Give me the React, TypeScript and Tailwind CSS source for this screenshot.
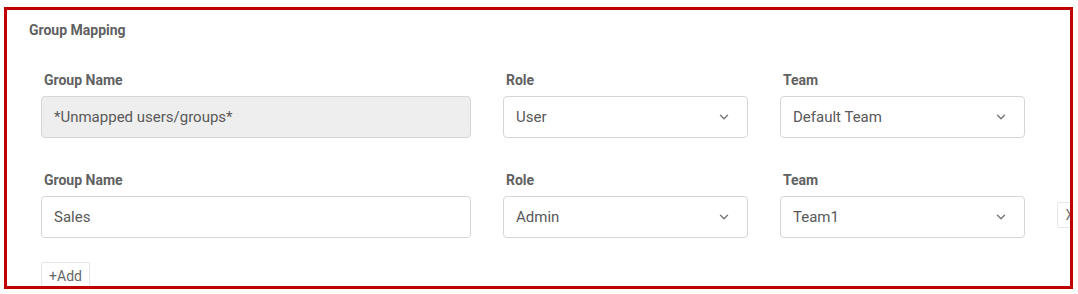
import { ChevronDown } from 'lucide-react';

interface MappingRow {
  group: string;
  role: string;
  team: string;
  locked?: boolean;
}

const rows: MappingRow[] = [
  { group: '*Unmapped users/groups*', role: 'User', team: 'Default Team', locked: true },
  { group: 'Sales', role: 'Admin', team: 'Team1' },
];

function Label({ children }: { children: string }) {
  return (
    <div className="pl-[3px] text-[14px] leading-[20px] font-bold text-[#616161]">{children}</div>
  );
}

function SelectBox({ value }: { value: string }) {
  return (
    <div className="flex h-[42px] items-center justify-between rounded-[4px] border border-[#d6d6d6] bg-white pl-[12px] pr-[16px] text-[15px] text-[#595959]">
      <span>{value}</span>
      <ChevronDown className="h-[14px] w-[14px] text-[#7a7a7a]" strokeWidth={2.5} />
    </div>
  );
}

export default function App() {
  return (
    <div className="h-[294px] w-[1078px] bg-white pl-[4px] pt-[7px]" style={{ fontFamily: 'Roboto, "Liberation Sans", sans-serif' }}>
      <div className="h-[282px] w-[1069px] overflow-hidden border-[3px] border-[#c00000] bg-white">
        <div className="pl-[22px] pt-[10px] text-[14px] leading-[20px] font-bold text-[#616161]">
          Group Mapping
        </div>

        <div className="ml-[34px] mt-[30px] flex flex-col gap-[32px]">
          {rows.map((row, i) => (
            <div key={i} className="flex items-end gap-[32px]">
              <div className="flex w-[430px] shrink-0 flex-col gap-[6px]">
                <Label>Group Name</Label>
                <div
                  className={
                    row.locked
                      ? 'flex h-[42px] items-center rounded-[4px] border border-[#d6d6d6] bg-[#eeeeee] px-[12px] text-[15px] text-[#595959]'
                      : 'flex h-[42px] items-center rounded-[4px] border border-[#d6d6d6] bg-white px-[12px] text-[15px] text-[#595959]'
                  }
                >
                  {row.group}
                </div>
              </div>
              <div className="flex w-[245px] shrink-0 flex-col gap-[6px]">
                <Label>Role</Label>
                <SelectBox value={row.role} />
              </div>
              <div className="flex w-[245px] shrink-0 flex-col gap-[6px]">
                <Label>Team</Label>
                <SelectBox value={row.team} />
              </div>
              {!row.locked && (
                <button className="mb-[10px] flex h-[26px] w-[26px] shrink-0 items-center justify-center rounded-[2px] border border-[#e8e8e8] bg-white text-[14px] text-[#777]">
                  X
                </button>
              )}
            </div>
          ))}
        </div>

        <button className="ml-[34px] mt-[24px] flex h-[28px] w-[49px] items-center justify-center rounded-[2px] border border-[#e6e6e6] bg-white text-[14px] text-[#666]">
          +Add
        </button>
      </div>
    </div>
  );
}
